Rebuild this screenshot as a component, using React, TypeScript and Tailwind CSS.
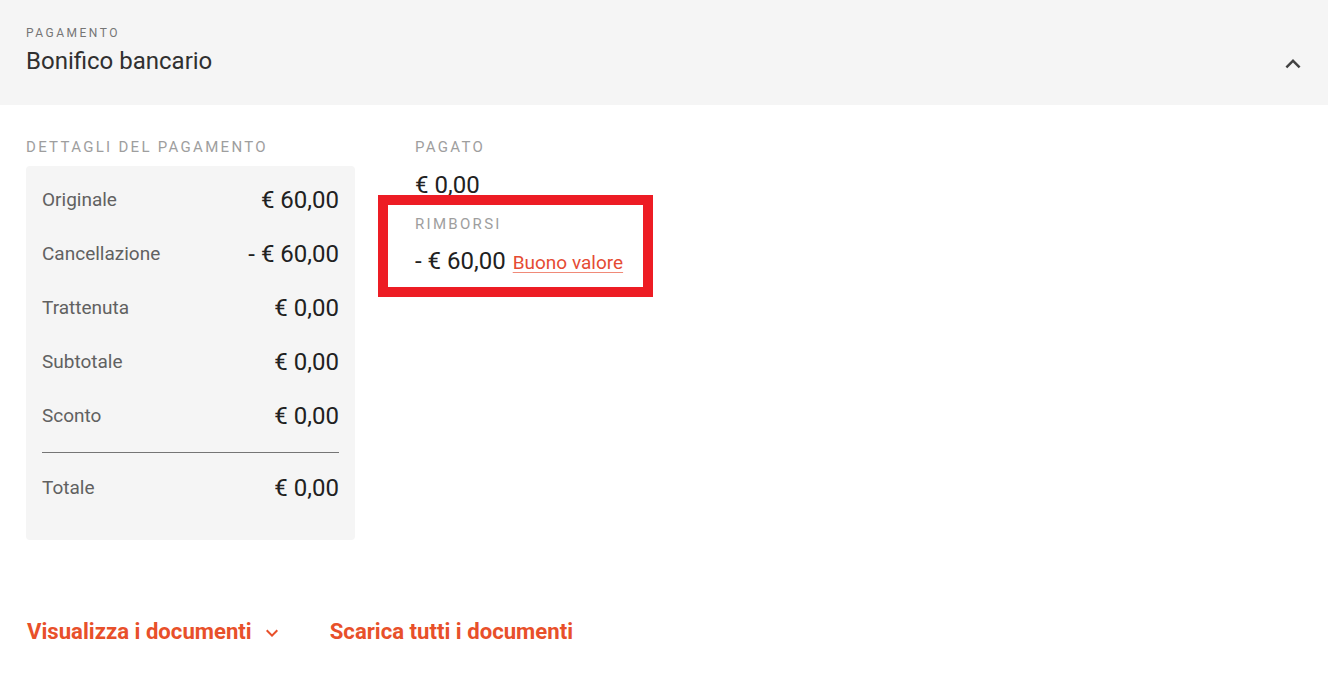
const font = { fontFamily: 'Roboto, "Liberation Sans", sans-serif' };

function ChevronUp() {
  return (
    <svg viewBox="0 0 24 24" className="w-[30px] h-[30px] fill-[#424242]">
      <path d="M12 8l-6 6 1.41 1.41L12 10.83l4.59 4.58L18 14z" />
    </svg>
  );
}

function ChevronDown() {
  return (
    <svg viewBox="0 0 24 24" className="w-[24px] h-[24px] fill-[#e8502a]">
      <path d="M16.59 8.59L12 13.17 7.41 8.59 6 10l6 6 6-6z" />
    </svg>
  );
}

const rows = [
  { label: 'Originale', value: '€ 60,00' },
  { label: 'Cancellazione', value: '- € 60,00' },
  { label: 'Trattenuta', value: '€ 0,00' },
  { label: 'Subtotale', value: '€ 0,00' },
  { label: 'Sconto', value: '€ 0,00' },
];

function Row({ label, value }: { label: string; value: string }) {
  return (
    <div className="flex items-center justify-between h-[36px]">
      <span className="text-[19px] text-[#616161]">{label}</span>
      <span className="text-[24px] text-[#212121]">{value}</span>
    </div>
  );
}

export default function App() {
  return (
    <div className="min-h-screen w-full bg-white" style={font}>
      <header className="bg-[#f5f5f5] h-[105px] flex items-center justify-between pl-[26px] pr-[20px]">
        <div className="flex flex-col pb-[3px]">
          <span className="text-[12px] leading-[16px] tracking-[2.5px] text-[#757575]">PAGAMENTO</span>
          <span className="mt-[4px] text-[24px] leading-[32px] text-[#303030]">Bonifico bancario</span>
        </div>
        <div className="pt-[22px]">
          <ChevronUp />
        </div>
      </header>

      <div className="flex px-[26px] pt-[32px]">
        <div className="w-[329px]">
          <div className="text-[15px] leading-[20px] tracking-[2.3px] text-[#9e9e9e]">DETTAGLI DEL PAGAMENTO</div>
          <div className="mt-[9px] bg-[#f5f5f5] rounded-[4px] px-[16px] pt-[16px] pb-[34px] flex flex-col gap-[18px]">
            {rows.map((r) => (
              <Row key={r.label} label={r.label} value={r.value} />
            ))}
            <div className="h-px bg-[#757575]" />
            <div className="-mt-[1px]">
              <Row label="Totale" value="€ 0,00" />
            </div>
          </div>
        </div>

        <div className="ml-[60px] relative">
          <div className="text-[15px] leading-[20px] tracking-[2.3px] text-[#9e9e9e]">PAGATO</div>
          <div className="mt-[12px] text-[24px] leading-[32px] text-[#212121]">€ 0,00</div>
          <div className="mt-[13px] text-[15px] leading-[20px] tracking-[2.3px] text-[#9e9e9e]">RIMBORSI</div>
          <div className="mt-[11px] flex items-baseline gap-[7px]">
            <span className="text-[24px] leading-[32px] text-[#212121]">- € 60,00</span>
            <a className="text-[19px] text-[#e54b33] underline underline-offset-[3px] decoration-[#f08a78]">Buono valore</a>
          </div>
          <div className="absolute left-[-37px] top-[58px] w-[275px] h-[102px] border-[10px] border-[#ed1c24]" />
        </div>
      </div>

      <div className="flex items-center px-[27px] mt-[75px]">
        <a className="flex items-center text-[22.15px] font-bold text-[#e8502a]">
          Visualizza i documenti
          <span className="ml-[8px] mt-[2px]">
            <ChevronDown />
          </span>
        </a>
        <a className="ml-[46px] text-[22.15px] font-bold text-[#e8502a]">Scarica tutti i documenti</a>
      </div>
    </div>
  );
}
